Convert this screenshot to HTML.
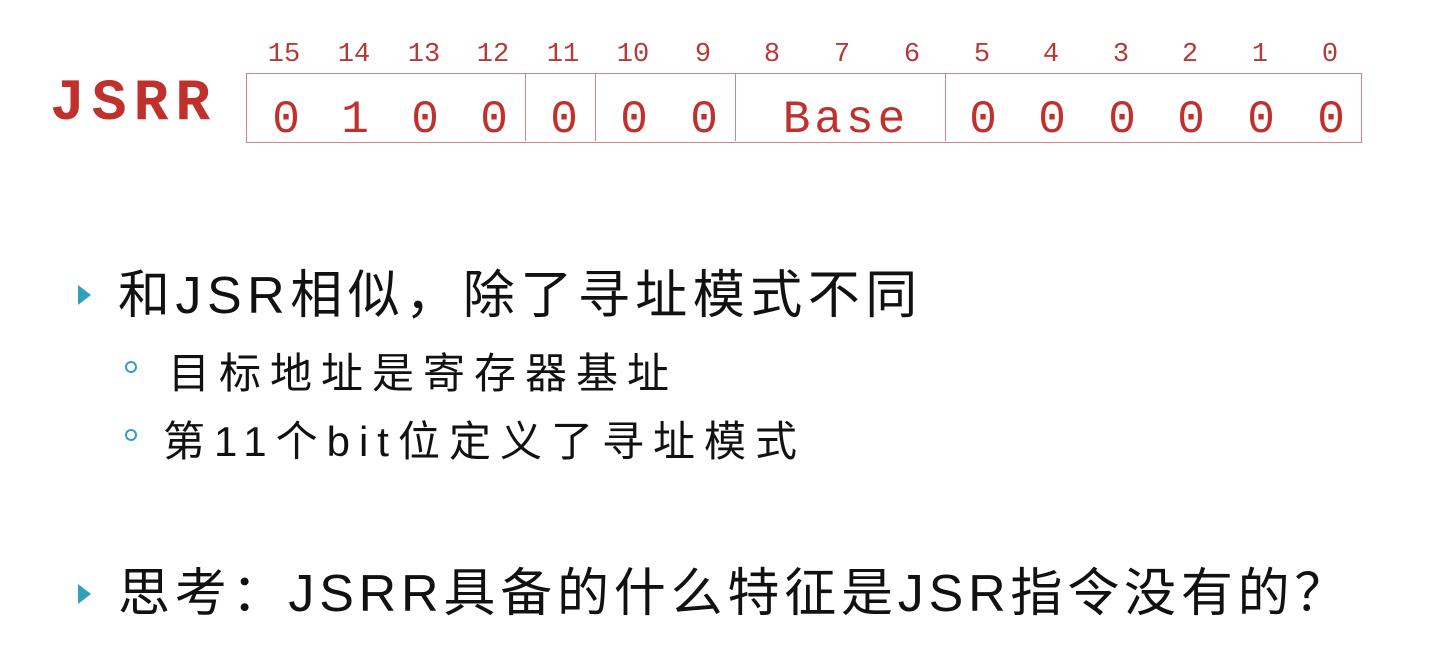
<!DOCTYPE html>
<html><head><meta charset="utf-8"><style>
body{margin:0;width:1438px;height:661px;background:#fff;position:relative;overflow:hidden;font-family:"Liberation Sans","Noto Sans CJK SC",sans-serif}
.a{position:absolute;white-space:nowrap}
.lab{position:absolute;top:40px;width:60px;margin-left:-30px;text-align:center;font:27px "Liberation Mono",monospace;color:#b53a36}
.val{position:absolute;top:94px;width:60px;margin-left:-30px;text-align:center;font:46px "Liberation Mono",monospace;color:#c0302c}
.box{position:absolute;top:73px;height:68px;border:1px solid #d08585}
.tri{position:absolute;width:0;height:0;border-left:13px solid #31a0bd;border-top:10px solid transparent;border-bottom:10px solid transparent}
.cir{position:absolute;width:8px;height:8px;border:2px solid #31a0bd;border-radius:50%}
.big{font-size:52px;color:#111;letter-spacing:5.5px}
.sm{font-size:42px;color:#111;letter-spacing:9px}
</style></head><body>
<div class="a" style="left:50px;top:72px;font:bold 58px 'Liberation Mono',monospace;color:#c0302c;letter-spacing:7px">JSRR</div>
<div class="box" style="left:246px;width:1114px"></div>
<div class="box" style="left:525px;width:0;border-width:0 0 0 1px"></div>
<div class="box" style="left:595px;width:0;border-width:0 0 0 1px"></div>
<div class="box" style="left:735px;width:0;border-width:0 0 0 1px"></div>
<div class="box" style="left:945px;width:0;border-width:0 0 0 1px"></div>
<div class="lab" style="left:284px">15</div><div class="lab" style="left:354px">14</div><div class="lab" style="left:424px">13</div><div class="lab" style="left:493px">12</div><div class="lab" style="left:563px">11</div><div class="lab" style="left:633px">10</div><div class="lab" style="left:703px">9</div><div class="lab" style="left:772px">8</div><div class="lab" style="left:842px">7</div><div class="lab" style="left:912px">6</div><div class="lab" style="left:982px">5</div><div class="lab" style="left:1051px">4</div><div class="lab" style="left:1121px">3</div><div class="lab" style="left:1190px">2</div><div class="lab" style="left:1260px">1</div><div class="lab" style="left:1330px">0</div>
<div class="val" style="left:286px">0</div><div class="val" style="left:355px">1</div><div class="val" style="left:425px">0</div><div class="val" style="left:494px">0</div><div class="val" style="left:564px">0</div><div class="val" style="left:634px">0</div><div class="val" style="left:704px">0</div>
<div class="val" style="left:846px;width:200px;margin-left:-100px;letter-spacing:4px">Base</div>
<div class="val" style="left:983px">0</div><div class="val" style="left:1052px">0</div><div class="val" style="left:1122px">0</div><div class="val" style="left:1191px">0</div><div class="val" style="left:1261px">0</div><div class="val" style="left:1331px">0</div>
<div class="tri" style="left:78px;top:285px"></div>
<div class="a big" style="left:118px;top:253px">和JSR相似，除了寻址模式不同</div>
<div class="cir" style="left:125px;top:361px"></div>
<div class="a sm" style="left:168px;top:340px">目标地址是寄存器基址</div>
<div class="cir" style="left:125px;top:429px"></div>
<div class="a sm" style="left:163px;top:408px">第11个bit位定义了寻址模式</div>
<div class="tri" style="left:78px;top:584px"></div>
<div class="a big" style="left:118px;top:551px;letter-spacing:4.8px">思考：JSRR具备的什么特征是JSR指令没有的？</div>
</body></html>
